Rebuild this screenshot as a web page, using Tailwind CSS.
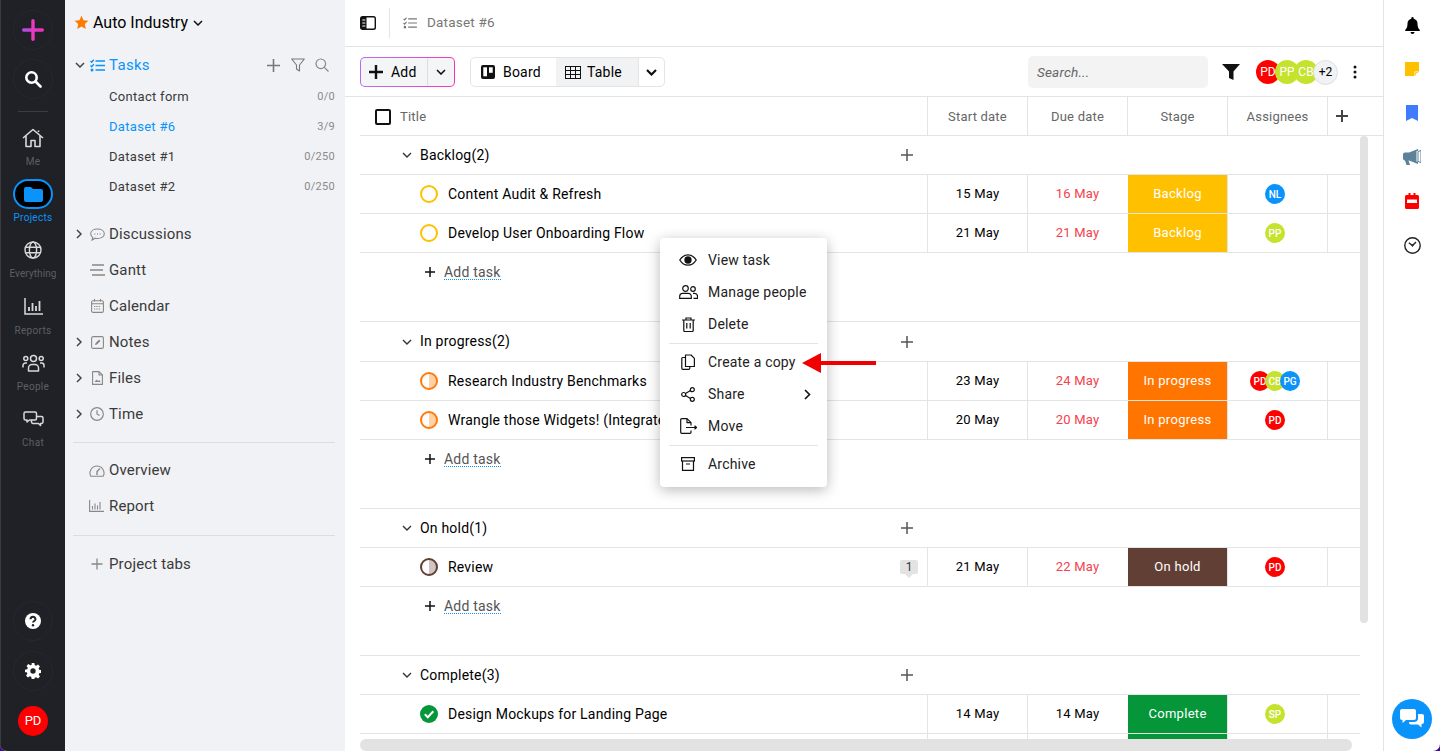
<!doctype html>
<html>
<head>
<meta charset="utf-8">
<script src="https://cdn.jsdelivr.net/npm/@tailwindcss/browser@4"></script>
</head>
<body class="bg-[#3d0a96]">
<div class="relative flex h-[751px] w-[1440px] overflow-hidden rounded-b-[7px] bg-white font-['Roboto',sans-serif] text-[14px] tracking-[0.2px] text-black">

  <!-- app rail -->
  <div class="flex w-[65px] shrink-0 flex-col items-center border-l border-[#3a3c42] bg-[#1f2126] text-[10px] tracking-[0.3px] text-[#5d5f64]">
    <div class="mt-[10px] flex h-[40px] w-[40px] items-center justify-center rounded-full border border-[#26282d]">
      <svg width="22" height="22" viewBox="0 0 22 22"><defs><linearGradient id="logo" x1="0" x2="1"><stop offset="0" stop-color="#b04ce6"/><stop offset="1" stop-color="#f52fb0"/></linearGradient></defs><rect x="0" y="9.300" width="22" height="3.400" rx="1.700" fill="url(#logo)"/><rect x="9.300" y="0" width="3.400" height="22" rx="1.700" fill="#e83bc0"/></svg>
    </div>
    <div class="mt-[9px] flex h-[40px] w-[40px] items-center justify-center rounded-full border border-[#26282d]">
      <svg width="18" height="18" viewBox="0 0 18 18" fill="none" stroke="#fff" stroke-width="2.600"><circle cx="7.500" cy="7.500" r="5.200"/><path d="M11.500 11.500l5 5" stroke-linecap="round"/></svg>
    </div>
    <div class="mt-[12px] h-px w-[30px] bg-[#3a3c41]"></div>
    <div class="mt-[10px] flex h-[56px] w-full flex-col items-center">
      <div class="flex h-[32px] items-center"><svg width="22" height="20" viewBox="0 0 22 20" fill="none" stroke="#d9d9db" stroke-width="1.600" stroke-linejoin="round"><path d="M1 10L11 1.500 21 10"/><path d="M4 8v10.500h5v-6h4v6h5V8"/><path d="M16.500 4V2.500"/></svg></div>
      <div class="mt-px h-[14px] leading-[14px]">Me</div>
    </div>
    <div class="flex h-[56px] w-full flex-col items-center text-[#0a93fb]">
      <div class="flex h-[32px] items-center"><div class="flex h-[30px] w-[40px] items-center justify-center rounded-full border-2 border-[#0a93fb] bg-black"><svg width="19" height="15" viewBox="0 0 19 15"><path d="M2 0h5l2 2h8a2 2 0 012 2v9a2 2 0 01-2 2H2a2 2 0 01-2-2V2a2 2 0 012-2z" fill="#0a93fb"/></svg></div></div>
      <div class="mt-px h-[14px] leading-[14px]">Projects</div>
    </div>
    <div class="flex h-[56px] w-full flex-col items-center">
      <div class="flex h-[32px] items-center"><svg width="18" height="18" viewBox="0 0 18 18" fill="none" stroke="#d9d9db" stroke-width="1.400"><circle cx="9" cy="9" r="8"/><ellipse cx="9" cy="9" rx="3.600" ry="8"/><path d="M1.500 6.300h15M1.500 11.700h15"/></svg></div>
      <div class="mt-px h-[14px] leading-[14px] tracking-[0.1px]">Everything</div>
    </div>
    <div class="flex h-[56px] w-full flex-col items-center">
      <div class="flex h-[33px] items-center"><svg width="19" height="17" viewBox="0 0 19 17" fill="none" stroke="#d9d9db" stroke-width="1.500"><path d="M1 0v16h18"/><path d="M5 9v4M8.500 5v8M12 8v5M15.500 3v10" stroke-width="1.800"/></svg></div>
      <div class="mt-px h-[14px] leading-[14px]">Reports</div>
    </div>
    <div class="flex h-[57px] w-full flex-col items-center">
      <div class="flex h-[33px] items-center"><svg width="23" height="18" viewBox="0 0 23 18" fill="none" stroke="#d9d9db" stroke-width="1.500"><circle cx="11.500" cy="4.500" r="3"/><circle cx="3.800" cy="4.500" r="2"/><circle cx="19.200" cy="4.500" r="2"/><path d="M6.500 17v-3a3.500 3.500 0 013.500-3.500h3a3.500 3.500 0 013.500 3.500v3z" stroke-linejoin="round"/><path d="M1 13.500v-2A2.500 2.500 0 013.500 9h1.500M22 13.500v-2A2.500 2.500 0 0019.500 9H18"/></svg></div>
      <div class="mt-px h-[14px] leading-[14px]">People</div>
    </div>
    <div class="flex h-[56px] w-full flex-col items-center">
      <div class="flex h-[33px] items-center"><svg width="21" height="18" viewBox="0 0 21 18" fill="none" stroke="#d9d9db" stroke-width="1.500" stroke-linejoin="round"><path d="M2.500 1h9.500a1.500 1.500 0 011.500 1.500v5A1.500 1.500 0 0112 9H6.500L4 11V9H2.500A1.500 1.500 0 011 7.500v-5A1.500 1.500 0 012.500 1z"/><path d="M8.500 9v2a1.500 1.500 0 001.500 1.500h5.500l2 2v-2h1A1.500 1.500 0 0020 11V7a1.500 1.500 0 00-1.500-1.500h-5"/></svg></div>
      <div class="h-[14px] leading-[14px]">Chat</div>
    </div>
    <div class="mt-auto mb-[10px] flex h-[40px] w-[40px] items-center justify-center rounded-full border border-[#26282d]">
      <svg width="16" height="16" viewBox="0 0 16 16"><circle cx="8" cy="8" r="8" fill="#fff"/><path d="M5.500 6.200a2.500 2.500 0 115 0c0 1.700-2.500 1.800-2.500 3.300" fill="none" stroke="#1f2126" stroke-width="2"/><circle cx="8" cy="12.300" r="1.200" fill="#1f2126"/></svg>
    </div>
    <div class="mb-[15px] flex h-[40px] w-[40px] items-center justify-center rounded-full border border-[#26282d]">
      <svg width="16" height="16" viewBox="0 0 24 24" fill="#fff"><path fill-rule="evenodd" d="M10 0h4l.7 3.400 2 .8L19.600 2.300l2.800 2.800-1.900 2.900.8 2 3.400.7v4l-3.400.7-.8 2 1.900 2.900-2.800 2.800-2.900-1.900-2 .8L14 24h-4l-.7-3.400-2-.8-2.900 1.900-2.800-2.800L3.500 16l-.8-2L0 14v-4l3.400-.7.8-2L2.300 4.400l2.800-2.800L8 3.500l2-.8zM12 8a4 4 0 100 8 4 4 0 000-8z"/></svg>
    </div>
    <div class="mb-[15px] flex h-[30px] w-[30px] items-center justify-center rounded-full bg-[#ff0000] text-[13px] tracking-normal text-white">PD</div>
  </div>

  <!-- project sidebar -->
  <div class="w-[280px] shrink-0 bg-[#f1f2f5] pl-[8px] pr-[10px] tracking-[0.3px] text-[#3a3a3a]">
    <div class="flex h-[44px] items-center pl-[1px] pt-[1px] text-[16px] tracking-normal text-black">
      <svg class="mr-[4px]" width="15" height="15" viewBox="0 0 24 24" fill="#ff7a00"><path d="M12 1l3.300 7.200 7.700.9-5.700 5.300 1.500 7.800L12 18.300 5.200 22.200l1.500-7.800L1 9.100l7.700-.9z"/></svg>
      <span>Auto Industry</span>
      <svg class="ml-[5px]" width="10" height="6" viewBox="0 0 10 6" fill="none" stroke="#111" stroke-width="1.500"><path d="M1 1l4 4 4-4"/></svg>
    </div>
    <div class="mt-[6px] flex h-[30px] items-center text-[15px] text-[#0a93fb]">
      <svg class="ml-[2px]" width="10" height="6" viewBox="0 0 10 6" fill="none" stroke="#444" stroke-width="1.500"><path d="M1 1l4 4 4-4"/></svg>
      <svg class="ml-[5px]" width="15" height="13" viewBox="0 0 15 13" fill="none" stroke="#0a93fb" stroke-width="1.400"><path d="M5.500 2h9.500M5.500 6.500h9.500M5.500 11h9.500"/><path d="M.5 2l1.200 1.200L3.800.8M.5 6.500l1.200 1.200 2.100-2.400"/><circle cx="2" cy="11" r=".8"/></svg>
      <span class="ml-[4px]">Tasks</span>
      <svg class="ml-auto" width="13" height="13" viewBox="0 0 13 13" stroke="#777" stroke-width="1.600"><path d="M6.500 0v13M0 6.500h13"/></svg>
      <svg class="ml-[11px]" width="14" height="14" viewBox="0 0 14 14" fill="none" stroke="#777" stroke-width="1.100" stroke-linejoin="round"><path d="M.7 1h12.600L8.500 7v6L5.500 11V7z"/></svg>
      <svg class="ml-[10px] mr-[6px]" width="14" height="14" viewBox="0 0 14 14" fill="none" stroke="#888" stroke-width="1.200"><circle cx="5.800" cy="5.800" r="4.800"/><path d="M9.300 9.300l4.200 4.200"/></svg>
    </div>
    <div class="mt-[2px] text-[13px]">
      <div class="flex h-[30px] items-center pl-[36px]"><span>Contact form</span><span class="ml-auto text-[11px] text-[#8a8a8a]">0/0</span></div>
      <div class="flex h-[30px] items-center pl-[36px] text-[#0a93fb]"><span>Dataset #6</span><span class="ml-auto text-[11px] text-[#8a8a8a]">3/9</span></div>
      <div class="flex h-[30px] items-center pl-[36px]"><span>Dataset #1</span><span class="ml-auto text-[11px] text-[#8a8a8a]">0/250</span></div>
      <div class="flex h-[30px] items-center pl-[36px]"><span>Dataset #2</span><span class="ml-auto text-[11px] text-[#8a8a8a]">0/250</span></div>
    </div>
    <div class="mt-[14px] text-[15px] tracking-[0.15px]">
      <div class="flex h-[36px] items-center">
        <svg class="ml-[3px]" width="6" height="10" viewBox="0 0 6 10" fill="none" stroke="#444" stroke-width="1.500"><path d="M1 1l4 4-4 4"/></svg>
        <svg class="ml-[8px]" width="15" height="13" viewBox="0 0 15 13" fill="none" stroke="#888" stroke-width="1.100"><path d="M7.500 1C3.500 1 .7 3 .7 5.800c0 1.500.8 2.800 2.100 3.600L2 12l3.300-1.800c.7.200 1.400.3 2.200.3 4 0 6.800-2 6.800-4.700S11.500 1 7.500 1z"/><path d="M4.500 6h.8M7.100 6h.8M9.700 6h.8" stroke-width="1.400"/></svg>
        <span class="ml-[4px]">Discussions</span>
      </div>
      <div class="flex h-[36px] items-center pl-[17px]">
        <svg width="15" height="12" viewBox="0 0 15 12" stroke="#888" stroke-width="1.300"><path d="M2 1h12M0 6h13M2 11h13"/></svg>
        <span class="ml-[4px]">Gantt</span>
      </div>
      <div class="flex h-[36px] items-center pl-[18px]">
        <svg width="13" height="14" viewBox="0 0 13 14" fill="none" stroke="#888" stroke-width="1.100"><rect x=".6" y="1.800" width="11.800" height="11.600" rx="1.500"/><path d="M.6 4.800h11.800M3.500 0v2.500M9.500 0v2.500"/><path d="M3 7.500h7M3 10h7" stroke-dasharray="1.300 1"/></svg>
        <span class="ml-[5px]">Calendar</span>
      </div>
      <div class="flex h-[36px] items-center">
        <svg class="ml-[3px]" width="6" height="10" viewBox="0 0 6 10" fill="none" stroke="#444" stroke-width="1.500"><path d="M1 1l4 4-4 4"/></svg>
        <svg class="ml-[9px]" width="13" height="13" viewBox="0 0 13 13" fill="none" stroke="#888" stroke-width="1.100"><rect x=".6" y=".6" width="11.800" height="11.800" rx="1.500"/><path d="M4 9l.6-2 3.500-3.500 1.400 1.400L6 8.400z" fill="#888" stroke="none"/></svg>
        <span class="ml-[5px]">Notes</span>
      </div>
      <div class="flex h-[36px] items-center">
        <svg class="ml-[3px]" width="6" height="10" viewBox="0 0 6 10" fill="none" stroke="#444" stroke-width="1.500"><path d="M1 1l4 4-4 4"/></svg>
        <svg class="ml-[10px]" width="11" height="14" viewBox="0 0 11 14" fill="none" stroke="#888" stroke-width="1.100" stroke-linejoin="round"><path d="M.6.6h6.400l3.400 3.400v9.400H.6z"/><path d="M7 .6V4h3.400"/><path d="M2.500 11l2-2.500 1.500 1.500 1.500-1 1 2z" fill="#888" stroke="none"/></svg>
        <span class="ml-[6px]">Files</span>
      </div>
      <div class="flex h-[36px] items-center">
        <svg class="ml-[3px]" width="6" height="10" viewBox="0 0 6 10" fill="none" stroke="#444" stroke-width="1.500"><path d="M1 1l4 4-4 4"/></svg>
        <svg class="ml-[8px]" width="14" height="14" viewBox="0 0 14 14" fill="none" stroke="#888" stroke-width="1.200"><circle cx="7" cy="7" r="6.300"/><path d="M7 3.200V7l2.600 1.600"/></svg>
        <span class="ml-[5px]">Time</span>
      </div>
    </div>
    <div class="mt-[10px] h-px bg-[#dcdde0]"></div>
    <div class="mt-[9px] text-[15px] tracking-[0.15px]">
      <div class="flex h-[36px] items-center pl-[16px]">
        <svg width="16" height="13" viewBox="0 0 16 13" fill="none" stroke="#888" stroke-width="1.100"><path d="M1.800 12.300a7 7 0 1112.400 0z" stroke-linejoin="round"/><path d="M8 11V7.500l3-3M3.500 8h.1M5 4.800h.1M8 3.500h.1M12.500 8h.1" stroke-width="1.400"/></svg>
        <span class="ml-[4px]">Overview</span>
      </div>
      <div class="flex h-[36px] items-center pl-[16px]">
        <svg width="15" height="12" viewBox="0 0 15 12" fill="none" stroke="#888" stroke-width="1.100"><path d="M.6 0v11.400H15"/><path d="M3.500 6v3.500M6 3.500v6M8.500 5.500v4M11 2v7.500"/></svg>
        <span class="ml-[5px]">Report</span>
      </div>
    </div>
    <div class="mt-[11px] h-px bg-[#dcdde0]"></div>
    <div class="mt-[10px] flex h-[36px] items-center pl-[18px] text-[15px] tracking-[0.15px]">
      <svg width="12" height="12" viewBox="0 0 12 12" stroke="#888" stroke-width="1.300"><path d="M6 .5v11M.5 6h11"/></svg>
      <span class="ml-[6px]">Project tabs</span>
    </div>
  </div>

  <!-- main -->
  <div class="relative flex min-w-0 flex-1 flex-col border-r border-[#e4e4e4]">
    <div class="flex h-[47px] shrink-0 items-center border-b border-[#e4e4e4] pb-px pl-[15px] text-[13.500px] text-[#777]">
      <svg width="16" height="14" viewBox="0 0 16 14"><rect x=".7" y=".7" width="14.600" height="12.600" rx="1.800" fill="none" stroke="#111" stroke-width="1.400"/><path d="M1 1h5.500v12H1z" fill="#111"/><path d="M2.300 4h3M2.300 7h3M2.300 10h3" stroke="#fff"/></svg>
      <div class="ml-[13px] h-[30px] w-px bg-[#e4e4e4]"></div>
      <svg class="ml-[13px]" width="14" height="12" viewBox="0 0 15 13" fill="none" stroke="#777" stroke-width="1.200"><path d="M5.500 2h9.500M5.500 6.500h9.500M5.500 11h9.500"/><path d="M.5 2l1.200 1.200L3.800.8M.5 6.500l1.200 1.200 2.100-2.400"/><circle cx="2" cy="11" r=".8"/></svg>
      <span class="ml-[10px]">Dataset #6</span>
    </div>
    <div class="flex h-[50px] shrink-0 items-center border-b border-[#e4e4e4] pt-px pl-[15px]">
      <div class="rounded-[5px] bg-gradient-to-r from-[#b66bf2] to-[#f532b4] p-px">
        <div class="flex h-[28px] w-[93px] items-center rounded-[4px] bg-[#f4f5f7]">
          <svg class="ml-[8px]" width="14" height="14" viewBox="0 0 14 14" stroke="#111" stroke-width="2.400"><path d="M7 0v14M0 7h14"/></svg>
          <span class="ml-[8px]">Add</span>
          <div class="ml-auto flex h-full w-[27px] items-center justify-center border-l border-[#dddddd]"><svg width="10" height="6" viewBox="0 0 10 6" fill="none" stroke="#111" stroke-width="1.600"><path d="M1 1l4 4 4-4"/></svg></div>
        </div>
      </div>
      <div class="ml-[15px] flex h-[30px] w-[195px] items-center overflow-hidden rounded-[5px] border border-[#e4e4e4]">
        <div class="flex h-full w-[85px] items-center pl-[10px]">
          <svg width="14" height="14" viewBox="0 0 14 14"><rect width="14" height="14" rx="2" fill="#111"/><rect x="2.300" y="2.300" width="3.700" height="9" fill="#fff"/><rect x="8" y="2.300" width="3.700" height="5.500" fill="#fff"/></svg>
          <span class="ml-[8px]">Board</span>
        </div>
        <div class="flex h-full w-[82px] items-center bg-[#f1f2f4] pl-[9px]">
          <svg width="16" height="13" viewBox="0 0 16 13" fill="none" stroke="#111" stroke-width="1"><rect x=".5" y=".5" width="15" height="12"/><path d="M.5 4.500h15M.5 8.500h15M5.500.5v12M10.500.5v12"/></svg>
          <span class="ml-[6px]">Table</span>
        </div>
        <div class="flex h-full flex-1 items-center justify-center border-l border-[#e4e4e4]"><svg width="11" height="7" viewBox="0 0 11 7" fill="none" stroke="#111" stroke-width="2.200"><path d="M1 1l4.500 4.500L10 1"/></svg></div>
      </div>
      <div class="ml-auto flex h-[32px] w-[180px] items-center rounded-[5px] bg-[#f3f3f3] pl-[9px] text-[13.500px] text-[#666] italic">Search...</div>
      <svg class="ml-[14px]" width="18" height="16" viewBox="0 0 18 16"><path d="M0 0h18l-6.500 7.500V16L7 14V7.500z" fill="#111"/></svg>
      <div class="ml-[16px] flex">
        <div class="flex h-[24px] w-[24px] items-center justify-center overflow-hidden rounded-full bg-[#ff0000] text-[12px] tracking-normal text-white">PD</div>
        <div class="-ml-[5px] flex h-[24px] w-[24px] items-center justify-center overflow-hidden rounded-full bg-[#c5e32d] text-[12px] tracking-normal text-white">PP</div>
        <div class="-ml-[5px] flex h-[24px] w-[24px] items-center justify-center overflow-hidden rounded-full bg-[#c5e32d] text-[12px] tracking-normal text-white">CB</div>
        <div class="-ml-[5px] flex h-[25px] w-[25px] items-center justify-center rounded-full border border-[#dfe0e3] bg-[#f1f2f4] text-[12px] tracking-normal">+2</div>
      </div>
      <svg class="ml-[15px] mr-[26px]" width="4" height="14" viewBox="0 0 4 14" fill="#111"><circle cx="2" cy="2" r="1.500"/><circle cx="2" cy="7" r="1.500"/><circle cx="2" cy="12" r="1.500"/></svg>
    </div>

    <!-- table -->
    <div class="ml-[15px] flex h-[39px] shrink-0 items-center border-b border-[#e4e4e4] pr-[15px] text-[13px] text-[#666]">
      <div class="flex h-full w-[567px] items-center pl-[15px] pt-px">
        <div class="h-[16px] w-[16px] rounded-[2px] border-2 border-[#111]"></div>
        <span class="ml-[9px]">Title</span>
      </div>
      <div class="flex h-full w-[100px] items-center justify-center border-l border-[#e4e4e4] pt-px">Start date</div>
      <div class="flex h-full w-[100px] items-center justify-center border-l border-[#e4e4e4] pt-px">Due date</div>
      <div class="flex h-full w-[100px] items-center justify-center border-l border-[#e4e4e4] pt-px">Stage</div>
      <div class="flex h-full w-[100px] items-center justify-center border-l border-[#e4e4e4] pt-px">Assignees</div>
      <div class="flex h-full flex-1 items-center justify-center border-l border-[#e4e4e4]"><svg class="mr-[13px]" width="12" height="12" viewBox="0 0 12 12" stroke="#444" stroke-width="2"><path d="M6 0v12M0 6h12"/></svg></div>
    </div>

    <div class="ml-[15px] mr-[23px] min-h-0 flex-1 overflow-hidden">
      <!-- backlog -->
      <div class="flex h-[39px] items-center border-b border-[#e4e4e4] pl-[42px]">
        <svg width="10" height="6" viewBox="0 0 10 6" fill="none" stroke="#333" stroke-width="1.400"><path d="M1 1l4 4 4-4"/></svg>
        <span class="ml-[8px]">Backlog(2)</span>
        <svg class="ml-auto mr-[447px]" width="12" height="12" viewBox="0 0 12 12" stroke="#555" stroke-width="1.500"><path d="M6 0v12M0 6h12"/></svg>
      </div>
      <div class="flex h-[39px] border-b border-[#e4e4e4]">
        <div class="flex w-[567px] items-center pl-[60px]"><div class="h-[18px] w-[18px] rounded-full border-2 border-[#ffc000]"></div><span class="ml-[10px]">Content Audit &amp; Refresh</span></div>
        <div class="flex w-[100px] items-center justify-center border-l border-[#e4e4e4] pb-px text-[13px]">15 May</div>
        <div class="flex w-[100px] items-center justify-center border-l border-[#e4e4e4] pb-px text-[13px] text-[#f5414d]">16 May</div>
        <div class="flex w-[100px] items-center justify-center border-l border-white bg-[#ffc000] pb-px text-[13px] tracking-[0.3px] text-white">Backlog</div>
        <div class="flex w-[100px] items-center justify-center border-l border-[#e4e4e4] pr-[5px]"><div class="flex h-[20px] w-[20px] items-center justify-center overflow-hidden rounded-full bg-[#0a93fb] text-[10px] font-medium tracking-normal text-white">NL</div></div>
        <div class="flex-1 border-l border-[#e4e4e4]"></div>
      </div>
      <div class="flex h-[39px] border-b border-[#e4e4e4]">
        <div class="flex w-[567px] items-center pl-[60px]"><div class="h-[18px] w-[18px] rounded-full border-2 border-[#ffc000]"></div><span class="ml-[10px]">Develop User Onboarding Flow</span></div>
        <div class="flex w-[100px] items-center justify-center border-l border-[#e4e4e4] pb-px text-[13px]">21 May</div>
        <div class="flex w-[100px] items-center justify-center border-l border-[#e4e4e4] pb-px text-[13px] text-[#f5414d]">21 May</div>
        <div class="flex w-[100px] items-center justify-center border-l border-white bg-[#ffc000] pb-px text-[13px] tracking-[0.3px] text-white">Backlog</div>
        <div class="flex w-[100px] items-center justify-center border-l border-[#e4e4e4] pr-[5px]"><div class="flex h-[20px] w-[20px] items-center justify-center overflow-hidden rounded-full bg-[#c5e32d] text-[10px] font-medium tracking-normal text-white">PP</div></div>
        <div class="flex-1 border-l border-[#e4e4e4]"></div>
      </div>
      <div class="h-[69px] border-b border-[#e4e4e4] pl-[65px] pt-[11px]">
        <div class="flex h-[16px] items-center text-[#555]">
          <svg width="10" height="10" viewBox="0 0 10 10" stroke="#111" stroke-width="1.500"><path d="M5 0v10M0 5h10"/></svg>
          <span class="ml-[9px] border-b border-dotted border-[#0a93fb] leading-[14px]">Add task</span>
        </div>
      </div>

      <!-- in progress -->
      <div class="flex h-[40px] items-center border-b border-[#e4e4e4] pl-[42px]">
        <svg width="10" height="6" viewBox="0 0 10 6" fill="none" stroke="#333" stroke-width="1.400"><path d="M1 1l4 4 4-4"/></svg>
        <span class="ml-[8px]">In progress(2)</span>
        <svg class="ml-auto mr-[447px]" width="12" height="12" viewBox="0 0 12 12" stroke="#555" stroke-width="1.500"><path d="M6 0v12M0 6h12"/></svg>
      </div>
      <div class="flex h-[39px] border-b border-[#e4e4e4]">
        <div class="flex w-[567px] items-center pl-[60px]"><div class="h-[18px] w-[18px] rounded-full border-2 border-[#ff7a0a] bg-[linear-gradient(90deg,#fff_50%,#ffd2a8_50%)]"></div><span class="ml-[10px]">Research Industry Benchmarks</span></div>
        <div class="flex w-[100px] items-center justify-center border-l border-[#e4e4e4] pb-px text-[13px]">23 May</div>
        <div class="flex w-[100px] items-center justify-center border-l border-[#e4e4e4] pb-px text-[13px] text-[#f5414d]">24 May</div>
        <div class="flex w-[100px] items-center justify-center border-l border-white bg-[#ff7500] pb-px text-[13px] tracking-[0.3px] text-white">In progress</div>
        <div class="flex w-[100px] items-center justify-center border-l border-[#e4e4e4] pr-[5px]">
          <div class="flex h-[20px] w-[20px] items-center justify-center overflow-hidden rounded-full bg-[#ff0000] text-[10px] font-medium tracking-normal text-white">PD</div>
          <div class="-ml-[5px] flex h-[20px] w-[20px] items-center justify-center overflow-hidden rounded-full bg-[#c5e32d] text-[10px] font-medium tracking-normal text-white">CB</div>
          <div class="-ml-[5px] flex h-[20px] w-[20px] items-center justify-center overflow-hidden rounded-full bg-[#0a93fb] text-[10px] font-medium tracking-normal text-white">PG</div>
        </div>
        <div class="flex-1 border-l border-[#e4e4e4]"></div>
      </div>
      <div class="flex h-[39px] border-b border-[#e4e4e4]">
        <div class="flex w-[567px] items-center pl-[60px]"><div class="h-[18px] w-[18px] shrink-0 rounded-full border-2 border-[#ff7a0a] bg-[linear-gradient(90deg,#fff_50%,#ffd2a8_50%)]"></div><span class="ml-[10px] w-[212px] overflow-hidden whitespace-nowrap">Wrangle those Widgets! (Integrate</span></div>
        <div class="flex w-[100px] items-center justify-center border-l border-[#e4e4e4] pb-px text-[13px]">20 May</div>
        <div class="flex w-[100px] items-center justify-center border-l border-[#e4e4e4] pb-px text-[13px] text-[#f5414d]">20 May</div>
        <div class="flex w-[100px] items-center justify-center border-l border-white bg-[#ff7500] pb-px text-[13px] tracking-[0.3px] text-white">In progress</div>
        <div class="flex w-[100px] items-center justify-center border-l border-[#e4e4e4] pr-[5px]"><div class="flex h-[20px] w-[20px] items-center justify-center overflow-hidden rounded-full bg-[#ff0000] text-[10px] font-medium tracking-normal text-white">PD</div></div>
        <div class="flex-1 border-l border-[#e4e4e4]"></div>
      </div>
      <div class="h-[69px] border-b border-[#e4e4e4] pl-[65px] pt-[11px]">
        <div class="flex h-[16px] items-center text-[#555]">
          <svg width="10" height="10" viewBox="0 0 10 10" stroke="#111" stroke-width="1.500"><path d="M5 0v10M0 5h10"/></svg>
          <span class="ml-[9px] border-b border-dotted border-[#0a93fb] leading-[14px]">Add task</span>
        </div>
      </div>

      <!-- on hold -->
      <div class="flex h-[39px] items-center border-b border-[#e4e4e4] pl-[42px]">
        <svg width="10" height="6" viewBox="0 0 10 6" fill="none" stroke="#333" stroke-width="1.400"><path d="M1 1l4 4 4-4"/></svg>
        <span class="ml-[8px]">On hold(1)</span>
        <svg class="ml-auto mr-[447px]" width="12" height="12" viewBox="0 0 12 12" stroke="#555" stroke-width="1.500"><path d="M6 0v12M0 6h12"/></svg>
      </div>
      <div class="flex h-[39px] border-b border-[#e4e4e4]">
        <div class="flex w-[567px] items-center pl-[60px]">
          <div class="h-[18px] w-[18px] rounded-full border-2 border-[#623f35] bg-[linear-gradient(90deg,#fff_50%,#d0c5c2_50%)]"></div><span class="ml-[10px]">Review</span>
          <div class="relative ml-auto mr-[9px] flex h-[14px] w-[18px] items-center justify-center rounded-[2px] bg-[#e3e3e3] text-[12px] tracking-normal text-[#333]">1<div class="absolute -bottom-[4px] h-0 w-0 border-x-[4px] border-t-[4px] border-x-transparent border-t-[#e3e3e3]"></div></div>
        </div>
        <div class="flex w-[100px] items-center justify-center border-l border-[#e4e4e4] pb-px text-[13px]">21 May</div>
        <div class="flex w-[100px] items-center justify-center border-l border-[#e4e4e4] pb-px text-[13px] text-[#f5414d]">22 May</div>
        <div class="flex w-[100px] items-center justify-center border-l border-white bg-[#623f35] pb-px text-[13px] tracking-[0.3px] text-white">On hold</div>
        <div class="flex w-[100px] items-center justify-center border-l border-[#e4e4e4] pr-[5px]"><div class="flex h-[20px] w-[20px] items-center justify-center overflow-hidden rounded-full bg-[#ff0000] text-[10px] font-medium tracking-normal text-white">PD</div></div>
        <div class="flex-1 border-l border-[#e4e4e4]"></div>
      </div>
      <div class="h-[69px] border-b border-[#e4e4e4] pl-[65px] pt-[11px]">
        <div class="flex h-[16px] items-center text-[#555]">
          <svg width="10" height="10" viewBox="0 0 10 10" stroke="#111" stroke-width="1.500"><path d="M5 0v10M0 5h10"/></svg>
          <span class="ml-[9px] border-b border-dotted border-[#0a93fb] leading-[14px]">Add task</span>
        </div>
      </div>

      <!-- complete -->
      <div class="flex h-[39px] items-center border-b border-[#e4e4e4] pl-[42px]">
        <svg width="10" height="6" viewBox="0 0 10 6" fill="none" stroke="#333" stroke-width="1.400"><path d="M1 1l4 4 4-4"/></svg>
        <span class="ml-[8px]">Complete(3)</span>
        <svg class="ml-auto mr-[447px]" width="12" height="12" viewBox="0 0 12 12" stroke="#555" stroke-width="1.500"><path d="M6 0v12M0 6h12"/></svg>
      </div>
      <div class="flex h-[39px] border-b border-[#e4e4e4]">
        <div class="flex w-[567px] items-center pl-[60px]">
          <svg width="18" height="18" viewBox="0 0 18 18"><circle cx="9" cy="9" r="9" fill="#059639"/><path d="M4.800 9.300l3 3 5.500-6" fill="none" stroke="#fff" stroke-width="2"/></svg>
          <span class="ml-[10px]">Design Mockups for Landing Page</span>
        </div>
        <div class="flex w-[100px] items-center justify-center border-l border-[#e4e4e4] pb-px text-[13px]">14 May</div>
        <div class="flex w-[100px] items-center justify-center border-l border-[#e4e4e4] pb-px text-[13px]">14 May</div>
        <div class="flex w-[100px] items-center justify-center border-l border-white bg-[#059639] pb-px text-[13px] tracking-[0.3px] text-white">Complete</div>
        <div class="flex w-[100px] items-center justify-center border-l border-[#e4e4e4] pr-[5px]"><div class="flex h-[20px] w-[20px] items-center justify-center overflow-hidden rounded-full bg-[#c5e32d] text-[10px] font-medium tracking-normal text-white">SP</div></div>
        <div class="flex-1 border-l border-[#e4e4e4]"></div>
      </div>
      <div class="flex h-[39px]">
        <div class="w-[567px]"></div>
        <div class="w-[100px] border-l border-[#e4e4e4]"></div>
        <div class="w-[100px] border-l border-[#e4e4e4]"></div>
        <div class="w-[100px] border-l border-white bg-[#059639]"></div>
        <div class="w-[100px] border-l border-[#e4e4e4]"></div>
        <div class="flex-1 border-l border-[#e4e4e4]"></div>
      </div>
    </div>

    <!-- scrollbars -->
    <div class="absolute left-[1015px] top-[136px] h-[487px] w-[8px] rounded-[4px] bg-[#e2e2e2]"></div>
    <div class="absolute bottom-0 left-[15px] h-[12px] w-[992px] rounded-[6px] bg-[#e2e2e2]"></div>
  </div>

  <!-- right rail -->
  <div class="flex w-[56px] shrink-0 flex-col items-center pt-[3px]">
    <div class="flex h-[44px] w-full items-center justify-center"><svg width="15" height="17" viewBox="0 0 15 17" fill="#000"><path d="M7.500 0a1.200 1.200 0 011.200 1.200v.5a5 5 0 013.800 4.800c0 3.200.8 5 2.300 6.500V14H.2v-1c1.500-1.500 2.300-3.300 2.300-6.500a5 5 0 013.800-4.800v-.5A1.200 1.200 0 017.500 0z"/><path d="M5.500 15h4a2 2 0 01-4 0z"/></svg></div>
    <div class="flex h-[44px] w-full items-center justify-center"><svg width="14" height="14" viewBox="0 0 14 14"><path d="M0 0h14v9.500L9.500 14H0z" fill="#ffc000"/><path d="M14 9.500H9.500V14z" fill="#fff"/><path d="M10.500 13v-2.500H13" fill="none" stroke="#ffc000" stroke-width=".8"/></svg></div>
    <div class="flex h-[44px] w-full items-center justify-center"><svg width="12" height="16" viewBox="0 0 12 16"><path d="M0 0h12v16l-6-3-6 3z" fill="#3f7bff"/></svg></div>
    <div class="flex h-[44px] w-full items-center justify-center"><svg width="18" height="16" viewBox="0 0 18 16" fill="#5b8299"><path d="M0 5.500a2 2 0 012-2h4l9-3.500v2h-1.500v10.500H15V15l-9-3.500H5.500L7 16H3.500L2 11.500a2 2 0 01-2-2z"/><path d="M15 2.500l3-1v12l-3-1z" fill="#fff" stroke="#5b8299" stroke-width="1"/></svg></div>
    <div class="flex h-[44px] w-full items-center justify-center"><svg width="14" height="16" viewBox="0 0 14 16"><path d="M1.500 2h2V0h2v2h3V0h2v2h2A1.500 1.500 0 0114 3.500v11A1.500 1.500 0 0112.500 16h-11A1.500 1.500 0 010 14.500v-11A1.500 1.500 0 011.500 2z" fill="#ff0000"/><rect x="2" y="6.500" width="10" height="3.500" fill="#fff"/></svg></div>
    <div class="flex h-[44px] w-full items-center justify-center"><svg width="17" height="17" viewBox="0 0 17 17" fill="none" stroke="#222" stroke-width="1.400"><circle cx="8.500" cy="8.500" r="7.700"/><path d="M4.800 5.800l3.700 2.700L12 5" /><path d="M7 7.500h3l-1.500 2.500z" fill="#222" stroke="none"/></svg></div>
  </div>

  <!-- task context menu -->
  <div class="absolute left-[660px] top-[238px] h-[249px] w-[167px] rounded-[4px] bg-white pt-[6px] text-[14px] text-[#222] shadow-[0_3px_14px_rgba(0,0,0,0.28)]">
    <div class="flex h-[32px] items-center pl-[19px]"><svg width="18" height="12" viewBox="0 0 18 12" fill="none" stroke="#111" stroke-width="1.300"><path d="M.8 6C3 2.500 5.800.8 9 .8s6 1.700 8.200 5.200C15 9.500 12.200 11.200 9 11.200S3 9.500.8 6z"/><circle cx="9" cy="6" r="3" fill="#111"/></svg><span class="ml-[11px]">View task</span></div>
    <div class="flex h-[32px] items-center pl-[19px]"><svg width="19" height="14" viewBox="0 0 19 14" fill="none" stroke="#111" stroke-width="1.200"><circle cx="6.500" cy="3.500" r="2.800"/><circle cx="14" cy="4" r="2.300"/><path d="M.7 13.300v-2A3 3 0 013.700 8.300h5.600a3 3 0 013 3v2z"/><path d="M14 8.300h1.500a3 3 0 013 3v2h-4"/></svg><span class="ml-[10px]">Manage people</span></div>
    <div class="flex h-[32px] items-center pl-[22px]"><svg width="13" height="15" viewBox="0 0 13 15" fill="none" stroke="#111" stroke-width="1.200"><path d="M0 3h13M4 3V1h5v2M1.800 3v10.500a1 1 0 001 1h7.400a1 1 0 001-1V3M4.800 6v5.500M8.200 6v5.500"/></svg><span class="ml-[13px]">Delete</span></div>
    <div class="mx-[9px] mt-[3px] mb-[2px] h-px bg-[#e4e4e4]"></div>
    <div class="flex h-[32px] items-center pl-[21px]"><svg width="14" height="16" viewBox="0 0 14 16" fill="none" stroke="#111" stroke-width="1.200" stroke-linejoin="round"><path d="M4.500 12.500V1h5.500l3.400 3.400v8.100z"/><path d="M4.500 3.500H1.800a1 1 0 00-1 1v9.800a1 1 0 001 1h6a1 1 0 001-1v-1.800"/></svg><span class="ml-[13px]">Create a copy</span></div>
    <div class="flex h-[32px] items-center pl-[21px]"><svg width="14" height="15" viewBox="0 0 14 15" fill="none" stroke="#111" stroke-width="1.200"><circle cx="2.700" cy="7.500" r="2"/><circle cx="11.300" cy="2.700" r="2"/><circle cx="11.300" cy="12.300" r="2"/><path d="M4.500 6.500l5-3M4.500 8.500l5 3"/></svg><span class="ml-[13px]">Share</span><svg class="ml-auto mr-[16px]" width="7" height="11" viewBox="0 0 7 11" fill="none" stroke="#111" stroke-width="1.600"><path d="M1 1l4.500 4.500L1 10"/></svg></div>
    <div class="flex h-[32px] items-center pl-[20px]"><svg width="17" height="16" viewBox="0 0 17 16" fill="none" stroke="#111" stroke-width="1.200" stroke-linejoin="round"><path d="M11 12.500v1.800a1 1 0 01-1 1H1.700a1 1 0 01-1-1V1.700a1 1 0 011-1H7l4 4v2.800"/><path d="M7 .7v4h4M6 9.500h10.500M14.500 7.700l2 1.800-2 1.800"/></svg><span class="ml-[11px]">Move</span></div>
    <div class="mx-[9px] mt-[3px] mb-[2px] h-px bg-[#e4e4e4]"></div>
    <div class="flex h-[32px] items-center pl-[21px]"><svg width="14" height="14" viewBox="0 0 14 14" fill="none" stroke="#111" stroke-width="1.200"><rect x=".6" y=".6" width="12.800" height="3.400"/><path d="M1.500 4v9.400h11V4M5 7h4"/></svg><span class="ml-[13px]">Archive</span></div>
  </div>

  <!-- annotation arrow -->
  <svg class="absolute left-[802px] top-[353px]" width="75" height="20" viewBox="0 0 75 20"><path d="M0 10L19 0v8h55v4H19v8z" fill="#f00000"/></svg>

  <!-- support chat -->
  <div class="absolute left-[1392px] top-[699px] flex h-[40px] w-[40px] items-center justify-center rounded-full bg-[#0a93fb]">
    <svg width="24" height="21" viewBox="0 0 24 21" fill="#fff"><path d="M2 0h12a2 2 0 012 2v7a2 2 0 01-2 2H6l-3.500 3V11H2a2 2 0 01-2-2V2a2 2 0 012-2z"/><path d="M18 5h4a2 2 0 012 2v6a2 2 0 01-2 2h-.5v3.500L18 15.500H11a2 2 0 01-1.800-2.500H14a4 4 0 004-4z"/></svg>
  </div>
</div>
</body>
</html>
